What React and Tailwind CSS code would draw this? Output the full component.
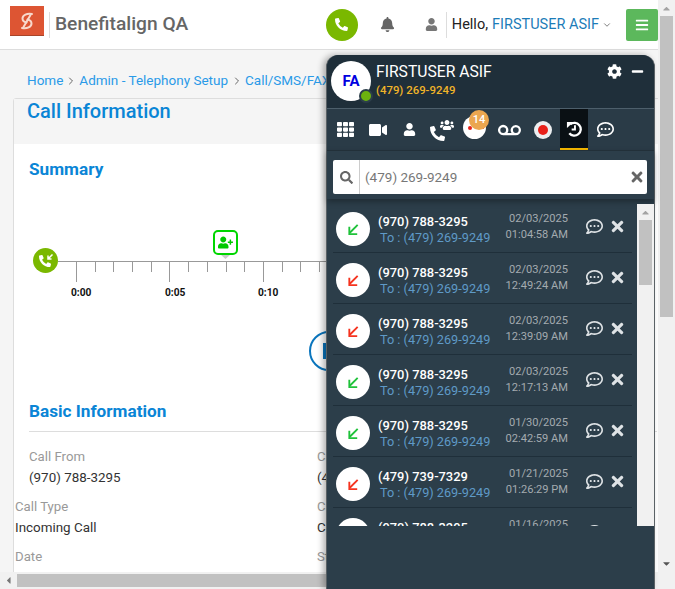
import { FaBars, FaBell, FaCaretDown, FaCaretLeft, FaCaretUp, FaCog, FaMinus, FaPhoneAlt, FaRegCommentDots, FaSearch, FaTh, FaTimes, FaUser, FaUserPlus, FaUsers, FaVideo, FaVoicemail } from 'react-icons/fa';
import { ChevronDown, ChevronRight } from 'lucide-react';

const calls = [
  { from: '(970) 788-3295', date: '02/03/2025', time: '01:04:58 AM', ok: true },
  { from: '(970) 788-3295', date: '02/03/2025', time: '12:49:24 AM', ok: false },
  { from: '(970) 788-3295', date: '02/03/2025', time: '12:39:09 AM', ok: false },
  { from: '(970) 788-3295', date: '02/03/2025', time: '12:17:13 AM', ok: true },
  { from: '(970) 788-3295', date: '01/30/2025', time: '02:42:59 AM', ok: true },
  { from: '(479) 739-7329', date: '01/21/2025', time: '01:26:29 PM', ok: false },
  { from: '(970) 788-3295', date: '01/16/2025', time: '11:02:18 PM', ok: false },
];

const ticks = [76, 95, 113, 132, 151, 169, 188, 207, 226, 244, 263, 282, 300, 319];

function Arrow({ ok }) {
  return (
    <svg width="13" height="13" viewBox="0 0 14 14" fill="none" stroke={ok ? '#1fc23a' : '#f5331f'} strokeWidth="2">
      <path d="M11.500 2 3 10.500" />
      <path d="M2.500 4v8h8.500" />
    </svg>
  );
}

function HistoryIcon() {
  return (
    <svg width="17" height="17" viewBox="0 0 18 18" fill="none" stroke="#fff" strokeWidth="2.400">
      <path d="M4.500 4.500A6.800 6.800 0 1 1 3.500 14" />
      <path d="M1 2h7L1 8.500z" fill="#fff" stroke="none" />
      <path d="M9.500 5.500v4.500H6" strokeWidth="2" />
    </svg>
  );
}

function Logo() {
  return (
    <div className="-mt-[7px] flex h-[30px] w-[34px] items-center justify-center border-b border-[#a8452a] bg-[#dd5533]">
      <svg width="16" height="22" viewBox="0 0 16 22" fill="none" stroke="#f8d8cc" strokeWidth="2" strokeLinecap="round">
        <path d="M13 4C8 3 3.500 5 3.500 8.500c0 2 1.500 3.500 4 4" />
        <path d="M3 18c5 1 9.500-1 9.500-4.500 0-2-1.500-3.500-4-4" />
        <path d="M11.500 5 4.500 17" />
      </svg>
    </div>
  );
}

function Info({ label, value, className }) {
  return (
    <div className={className}>
      <div className="h-[21px] text-[13.200px] leading-[21px] text-[#999]">{label}</div>
      <div className="h-[21px] text-[13.400px] leading-[21px] text-[#333]">{value}</div>
    </div>
  );
}

function CallRow({ call }) {
  return (
    <div className="flex h-[51px] w-[299px] shrink-0 items-start border-b border-[#1f2f3a] pt-[10px] pl-[3px] first:-mt-[2px]">
      <div className="flex h-[34px] w-[34px] shrink-0 items-center justify-center rounded-full bg-white">
        <Arrow ok={call.ok} />
      </div>
      <div className="mt-[2px] ml-[8px] w-[120px] shrink-0">
        <div className="text-[12.900px] leading-[16px] font-medium text-white">{call.from}</div>
        <div className="pl-[2px] text-[12.700px] leading-[16px] text-[#5f9ac7]">To : (479) 269-9249</div>
      </div>
      <div className="-mt-[1px] w-[70px] shrink-0 text-right text-[11.100px] leading-[16px] text-[#a4abb0]">
        <div>{call.date}</div>
        <div>{call.time}</div>
      </div>
      <div className="mt-[6px] ml-[18px] flex items-center gap-[8px] text-[#dfe3e6]">
        <FaRegCommentDots size={17} />
        <FaTimes size={17} className="-ml-[2px]" />
      </div>
    </div>
  );
}

function Softphone() {
  return (
    <div className="absolute top-[55px] left-[326px] flex h-[534px] w-[329px] flex-col rounded-t-[12px] border-x border-[#5b6266] bg-[#2c3e4a] shadow-[-3px_0_6px_rgba(0,0,0,0.3)]">
      <div className="flex h-[54px] shrink-0 items-start rounded-t-[12px] border-b border-[#4d5f6b] bg-[#1f2f3a] pt-[6px] pl-[4px]">
        <div className="relative flex h-[40px] w-[40px] items-center justify-center rounded-full bg-white text-[15px] font-bold text-[#0000e0]">
          FA
          <span className="absolute right-[-2px] bottom-[-2px] h-[14px] w-[14px] rounded-full border-2 border-[#2c3e4a] bg-[#6cb20f]"></span>
        </div>
        <div className="mt-px ml-[5px]">
          <div className="text-[15.700px] leading-[20px] text-white">FIRSTUSER ASIF</div>
          <div className="text-[11.400px] leading-[17px] font-medium text-[#f0b429]">(479) 269-9249</div>
        </div>
        <div className="mt-[3px] mr-[10px] ml-auto flex items-center gap-[9px] text-white">
          <FaCog size={15} />
          <FaMinus size={13} />
        </div>
      </div>
      <div className="flex h-[41px] shrink-0 items-center bg-[#2a3b47] pl-[10px] text-white shadow-[0_1px_0_#223039]">
        <FaTh size={17} />
        <FaVideo size={18} className="ml-[15px]" />
        <FaUser size={13} className="ml-[16px]" />
        <div className="relative ml-[14px] h-[26px] w-[24px]">
          <FaPhoneAlt size={15} className="absolute bottom-[2px] left-0" />
          <FaUsers size={14} className="absolute top-[1px] right-0" />
        </div>
        <div className="relative -mt-[4px] ml-[9px] h-[23px] w-[23px] rounded-full bg-white">
          <span className="absolute top-[10px] left-[5px] h-[4px] w-[4px] rounded-full bg-[#e8201a]"></span>
          <span className="absolute top-[10px] left-[16px] h-[3px] w-[5px] bg-[#e8201a]"></span>
          <span className="absolute top-[-6px] left-[6px] flex h-[20px] w-[20px] items-center justify-center rounded-full bg-[#eba650] text-[11px] font-medium text-white">14</span>
        </div>
        <FaVoicemail size={23} className="ml-[12px]" />
        <div className="ml-[13px] flex h-[18px] w-[18px] items-center justify-center rounded-full bg-[#eceef0]">
          <span className="h-[10px] w-[10px] rounded-full bg-[#e8201a]"></span>
        </div>
        <div className="ml-[8px] flex h-[41px] w-[28px] items-center justify-center border-b-2 border-[#f5b800] bg-[#0a1014]">
          <HistoryIcon />
        </div>
        <FaRegCommentDots size={17} className="ml-[9px]" />
      </div>
      <div className="shrink-0 px-[6px] pt-[10px] pb-[5px] shadow-[0_3px_6px_rgba(0,0,0,0.3)]">
        <div className="flex h-[34px] w-[314px] items-center rounded-[2px] bg-white">
          <div className="flex h-full w-[27px] shrink-0 items-center justify-center border-r border-[#ccc] text-[#666]">
            <FaSearch size={13} />
          </div>
          <span className="ml-[5px] text-[13.500px] text-[#777]">(479) 269-9249</span>
          <FaTimes size={16} className="mr-[2px] ml-auto text-[#666]" />
        </div>
      </div>
      <div className="mt-[5px] flex h-[322px] shrink-0 overflow-hidden pl-[6px]">
        <div className="flex w-[304px] shrink-0 flex-col overflow-hidden">
          {calls.map((call, i) => (
            <CallRow key={i} call={call} />
          ))}
        </div>
        <div className="flex w-[17px] shrink-0 flex-col items-center bg-[#f1f1f1] text-[#a3a3a3]">
          <FaCaretUp size={11} className="mt-[3px]" />
          <div className="mt-[2px] h-[65px] w-[13px] bg-[#c1c1c1]"></div>
        </div>
      </div>
    </div>
  );
}

function Timeline() {
  return (
    <div className="relative mt-[55px] h-[96px]">
      <svg className="absolute top-0 left-0" width="320" height="60" viewBox="14 235 320 60">
        <line x1="58" y1="261.500" x2="330" y2="261.500" stroke="#999" strokeWidth="1" />
        {ticks.map((x, i) => (
          <line key={x} x1={x + 0.5} y1="261" x2={x + 0.5} y2={i % 5 === 0 ? 282 : 272} stroke="#999" strokeWidth="1" />
        ))}
        <path d="M220 254h11l-5.500 5z" fill="#ccc" />
      </svg>
      <div className="absolute top-[13px] left-[19px] flex h-[25px] w-[25px] items-center justify-center rounded-full bg-[#7ab800] text-white">
        <FaPhoneAlt size={12} className="-ml-[2px]" />
        <svg width="6" height="6" viewBox="0 0 6 6" className="absolute top-[6px] right-[5px]" fill="none" stroke="#fff" strokeWidth="1.500">
          <path d="M5.500.500 1 5M1 1.500V5h3.500" />
        </svg>
      </div>
      <div className="absolute top-[-5px] left-[199px] flex h-[25px] w-[25px] items-center justify-center rounded-[5px] border-2 border-[#00d600] bg-white text-[#00c800]">
        <FaUserPlus size={15} />
      </div>
      <span className="absolute top-[50px] left-[57px] text-[10.200px] font-bold text-[#111]">0:00</span>
      <span className="absolute top-[50px] left-[151px] text-[10.200px] font-bold text-[#111]">0:05</span>
      <span className="absolute top-[50px] left-[244px] text-[10.200px] font-bold text-[#111]">0:10</span>
    </div>
  );
}

export default function App() {
  return (
    <div className="relative flex h-[589px] w-[675px] flex-col overflow-hidden bg-white font-['Roboto',sans-serif]">
      <div className="flex h-[572px] shrink-0">
        <div className="flex w-[658px] shrink-0 flex-col overflow-hidden">
          <header className="flex h-[50px] shrink-0 items-center border-b border-[#ddd] bg-white pl-[10px]">
            <Logo />
            <div className="ml-[5px] h-[26px] w-px bg-[#ddd]"></div>
            <span className="ml-[5px] text-[19.200px] font-medium text-[#666]">Benefitalign QA</span>
            <div className="ml-auto flex h-[32px] w-[32px] items-center justify-center rounded-full bg-[#7ab800] text-white">
              <FaPhoneAlt size={13} />
            </div>
            <FaBell size={15} className="ml-[22px] text-[#666]" />
            <FaUser size={13} className="ml-[30px] text-[#777]" />
            <div className="ml-[8px] h-[26px] w-px bg-[#ddd]"></div>
            <span className="ml-[5px] text-[14.500px] text-[#222]">Hello,</span>
            <span className="ml-[4px] text-[14.500px] text-[#1c7cb8]">FIRSTUSER ASIF</span>
            <ChevronDown size={10} className="ml-[3px] text-[#666]" />
            <div className="ml-[14px] flex h-[32px] w-[32px] items-center justify-center rounded-[2px] bg-[#5cb85c] text-white">
              <FaBars size={14} />
            </div>
          </header>
          <main className="min-h-0 flex-1 bg-[#f5f5f5] pl-[13px]">
            <div className="flex h-[48px] items-center whitespace-nowrap pt-[13px] pl-[14px] text-[13.500px] text-[#2a9ae8]">
              Home
              <ChevronRight size={12} className="mx-[2px] text-[#666]" />
              Admin - Telephony Setup
              <ChevronRight size={12} className="mx-[2.500px] text-[#666]" />
              Call/SMS/FAX
            </div>
            <div className="h-[600px] w-[660px] rounded-t-[3px] border border-[#ddd] bg-white">
              <div className="flex h-[45px] items-start bg-[#f5f5f5] pl-[13px] text-[20px] leading-[24px] font-medium text-[#0a85d6]">Call Information</div>
              <div className="pt-[14px]">
                <div className="pl-[15px] text-[17.200px] leading-[22px] font-bold text-[#0a85d6]">Summary</div>
                <Timeline />
                <div className="h-[67px] pl-[295px]">
                  <div className="flex h-[40px] w-[40px] items-center rounded-full border-2 border-[#0a75bd] pl-[12px]">
                    <span className="h-[16px] w-[3px] bg-[#0a75bd]"></span>
                  </div>
                </div>
                <div className="mx-[15px] mt-[2px] border-b border-[#ddd] pb-[9px] text-[17.200px] leading-[22px] font-bold text-[#0a85d6]">Basic Information</div>
                <div className="mt-[14px] flex pl-[15px]">
                  <Info className="w-[288px]" label="Call From" value="(970) 788-3295" />
                  <Info label="Call To" value="(479) 269-9249" />
                </div>
                <div className="mt-[8px] flex pl-[1px]">
                  <Info className="w-[302px]" label="Call Type" value="Incoming Call" />
                  <Info label="Call Status" value="Completed" />
                </div>
                <div className="mt-[8px] flex pl-[1px]">
                  <Info className="w-[302px]" label="Date" value="02/03/2025" />
                  <Info label="Start Time" value="01:04:58 AM" />
                </div>
              </div>
            </div>
          </main>
        </div>
        <div className="flex w-[17px] shrink-0 flex-col items-center bg-[#f1f1f1] text-[#a3a3a3]">
          <FaCaretUp size={11} className="mt-[3px]" />
          <div className="mt-[2px] h-[301px] w-[13px] bg-[#c1c1c1]"></div>
          <FaCaretDown size={11} className="mt-auto mb-[3px] text-[#555]" />
        </div>
      </div>
      <div className="flex h-[17px] shrink-0 items-center bg-[#f1f1f1] text-[#777]">
        <FaCaretLeft size={11} className="ml-[3px]" />
        <div className="ml-[3px] h-[13px] w-[500px] bg-[#c1c1c1]"></div>
      </div>
      <Softphone />
    </div>
  );
}
